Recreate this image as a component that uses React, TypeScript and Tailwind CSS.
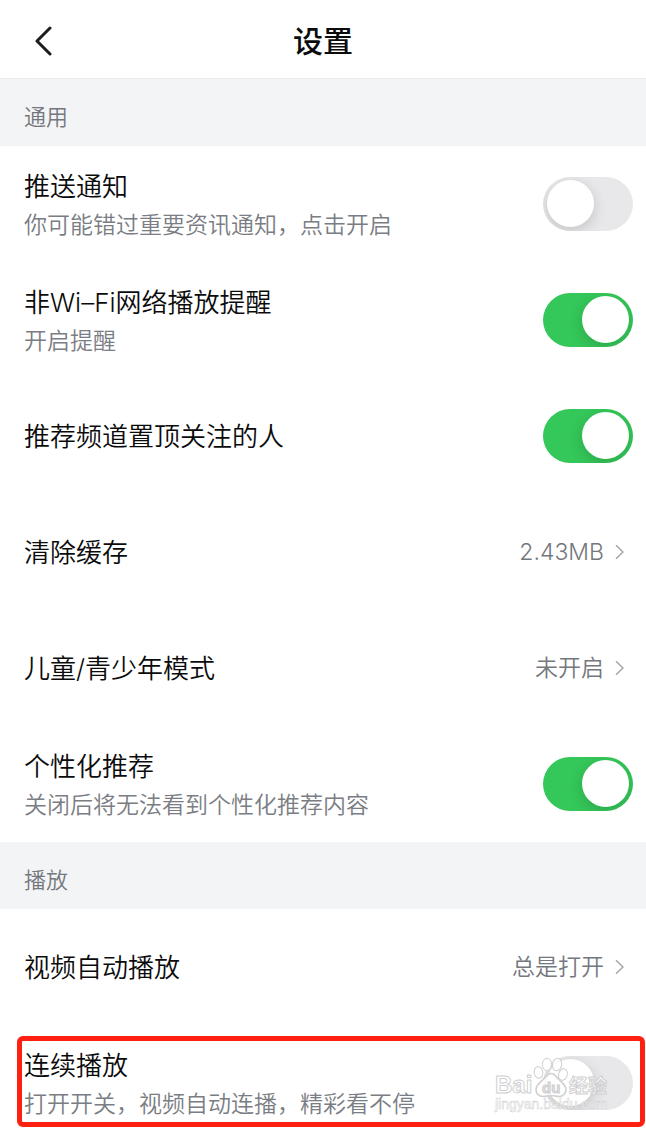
import {FunctionComponent, ReactNode, useId} from 'react'

const Toggle: FunctionComponent<{id: string; on?: boolean}> = ({id, on}) => (
  <input
    id={id}
    type="checkbox"
    role="switch"
    defaultChecked={on}
    className="relative h-[54px] w-[90px] shrink-0 cursor-pointer appearance-none overflow-hidden rounded-full bg-[#e8e8ea] before:absolute before:top-[3px] before:left-1 before:size-[47px] before:rounded-full before:bg-white before:shadow-[0_4px_14px_rgba(0,0,0,0.16)] checked:bg-[#34c759] checked:before:left-[39px]"
  />
)

type RowTextProps = {
  title: string
  note?: string
}

const RowText: FunctionComponent<RowTextProps> = ({title, note}) => (
  <span className="flex flex-col pt-0.5">
    <span className="text-[26px] leading-10 font-[350] text-[#0b0b0c]">
      {title}
    </span>
    {note && (
      <span className="text-[23px] leading-9 font-[350] text-[#7a7d83]">
        {note}
      </span>
    )}
  </span>
)

type SwitchRowProps = RowTextProps & {
  on?: boolean
  children?: ReactNode
}

const SwitchRow: FunctionComponent<SwitchRowProps> = ({
  title,
  note,
  on,
  children,
}) => {
  const id = useId()
  return (
    <li className="relative flex h-[116px] items-center justify-between pr-[13px] pl-6">
      <label htmlFor={id} className="grow cursor-pointer">
        <RowText title={title} note={note} />
      </label>
      <Toggle id={id} on={on} />
      {children}
    </li>
  )
}

const LinkRow: FunctionComponent<{title: string; value: string}> = ({
  title,
  value,
}) => (
  <li>
    <a
      href="#"
      className="flex h-[116px] items-center justify-between pr-[22px] pl-6"
    >
      <RowText title={title} />
      <span className="flex items-center gap-[11px] text-[23px] leading-9 font-[350] text-[#74777d]">
        {value}
        <svg
          viewBox="0 0 9 16"
          className="h-4 w-[9px]"
          fill="none"
          stroke="#a3a5a8"
          strokeWidth="1.5"
        >
          <path d="M1 1.2 8 8l-7 6.8" />
        </svg>
      </span>
    </a>
  </li>
)

const Section: FunctionComponent<{title: string; children: ReactNode}> = ({
  title,
  children,
}) => (
  <section>
    <h2 className="flex h-[67px] items-center bg-[#f3f4f6] pt-2 pl-6 text-[22px] leading-8 font-[350] text-[#74777d]">
      {title}
    </h2>
    <ul>{children}</ul>
  </section>
)

const Watermark: FunctionComponent = () => (
  <svg
    viewBox="0 0 118 58"
    className="pointer-events-none absolute top-[30px] right-[34px] h-[58px] w-[118px]"
    fill="#ffffff"
    fillOpacity="0.8"
    stroke="#cfcfd1"
    strokeWidth="1"
  >
    <ellipse cx="44.5" cy="17.5" rx="4.3" ry="5.8" transform="rotate(-10 44.5 17.5)" />
    <ellipse cx="53" cy="9.5" rx="4.6" ry="6.3" />
    <ellipse cx="63" cy="9.5" rx="4.6" ry="6.3" transform="rotate(8 63 9.5)" />
    <ellipse cx="69" cy="19.5" rx="4.4" ry="5.8" transform="rotate(15 69 19.5)" />
    <path
      d="M57 18.5c-3 0-5 2.500-7 5-3 3.500-8 6-8 11 0 4 3 7 7 7 3 0 5-1 8-1s5 1 8 1c4 0 7-3 7-7 0-5-5-7.500-8-11-2-2.500-4-5-7-5Z"
      strokeWidth="1.600"
    />
    <g className="font-['Liberation_Sans','Noto_Sans_CJK_SC',sans-serif] font-bold">
      <text x="1" y="38" fontSize="24">
        Bai
      </text>
      <text x="48" y="38" fontSize="15" fill="#d8d8da">
        du
      </text>
      <text x="75" y="38" fontSize="19">
        经验
      </text>
    </g>
    <text
      x="1"
      y="54"
      fontSize="14"
      strokeWidth="0.5"
      className="font-['Liberation_Sans',sans-serif]"
    >
      jingyan.baidu.com
    </text>
  </svg>
)

const Header: FunctionComponent = () => (
  <header className="grid h-[79px] shrink-0 grid-cols-[1fr_auto_1fr] items-center border-b border-[#ebebed] pt-1">
    <button
      type="button"
      aria-label="返回"
      className="ml-[34px] w-5 cursor-pointer"
    >
      <svg
        viewBox="0 0 20 30"
        className="h-[30px] w-5"
        fill="none"
        stroke="#1c1c1e"
        strokeWidth="3"
        strokeLinecap="round"
        strokeLinejoin="round"
      >
        <path d="M16 2 3 15l13 13" />
      </svg>
    </button>
    <h1 className="text-[30px] leading-10 font-medium text-[#0b0b0c]">设置</h1>
  </header>
)

const App: FunctionComponent = () => {
  return (
    <div className="flex h-screen flex-col bg-white font-['Inter','Noto_Sans_CJK_SC',sans-serif]">
      <Header />
      <main className="grow overflow-y-auto [scrollbar-width:none]">
        <Section title="通用">
          <SwitchRow
            title="推送通知"
            note="你可能错过重要资讯通知，点击开启"
          />
          <SwitchRow title="非Wi–Fi网络播放提醒" note="开启提醒" on />
          <SwitchRow title="推荐频道置顶关注的人" on />
          <LinkRow title="清除缓存" value="2.43MB" />
          <LinkRow title="儿童/青少年模式" value="未开启" />
          <SwitchRow
            title="个性化推荐"
            note="关闭后将无法看到个性化推荐内容"
            on
          />
        </Section>
        <Section title="播放">
          <LinkRow title="视频自动播放" value="总是打开" />
          <SwitchRow
            title="连续播放"
            note="打开开关，视频自动连播，精彩看不停"
          >
            <Watermark />
            <span className="pointer-events-none absolute top-[11px] right-px left-[17px] h-[91px] rounded-md border-5 border-[#ff2012]" />
          </SwitchRow>
        </Section>
      </main>
    </div>
  )
}

export default App
